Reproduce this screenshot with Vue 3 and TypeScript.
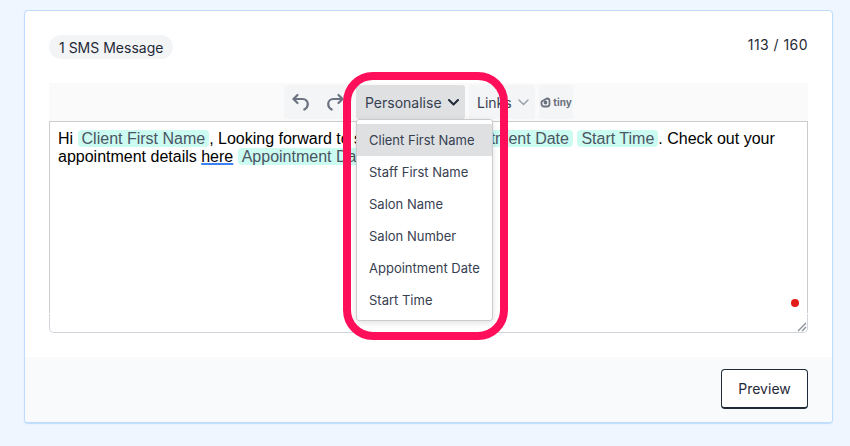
<script setup lang="ts">
const menuItems: string[] = [
  'Client First Name',
  'Staff First Name',
  'Salon Name',
  'Salon Number',
  'Appointment Date',
  'Start Time',
];
</script>

<template>
  <div class="Page">
    <div class="Card">
      <div class="CardBody">
        <div class="TopRow">
          <span class="Pill">1 SMS Message</span>
          <span class="Count">113 / 160</span>
        </div>

        <div class="Editor">
          <div class="Toolbar">
            <div class="IconGroup">
              <button class="ToolIcon">
                <svg width="20" height="20" viewBox="0 0 20 20" fill="none" stroke="#6b7280" stroke-width="2.200" stroke-linecap="round" stroke-linejoin="round">
                  <path d="M6.500 3 2.500 7l4 4" />
                  <path d="M2.800 7h9a5 5 0 0 1 5 5c0 2.500-1.500 4.500-3.500 5.500" />
                </svg>
              </button>
              <button class="ToolIcon">
                <svg width="20" height="20" viewBox="0 0 20 20" fill="none" stroke="#6b7280" stroke-width="2.200" stroke-linecap="round" stroke-linejoin="round">
                  <path d="M13.500 3l4 4-4 4" />
                  <path d="M17.200 7h-9a5 5 0 0 0-5 5c0 2.500 1.500 4.500 3.500 5.500" />
                </svg>
              </button>
            </div>
            <button class="ToolMenu Active">
              Personalise
              <svg width="11" height="7" viewBox="0 0 11 7" fill="none" stroke="#1f2937" stroke-width="2" stroke-linecap="round" stroke-linejoin="round">
                <path d="M1 1l4.500 4.500L10 1" />
              </svg>
            </button>
            <button class="ToolMenu Links">
              Links
              <svg width="11" height="7" viewBox="0 0 11 7" fill="none" stroke="#9ca3af" stroke-width="1.500" stroke-linecap="round" stroke-linejoin="round">
                <path d="M1 1l4.500 4.500L10 1" />
              </svg>
            </button>
            <div class="Tiny">
              <svg width="11" height="11" viewBox="0 0 11 11" fill="none" stroke="#6b7280" stroke-width="1.800">
                <path d="M2 4.200 7 1.500a2.500 2.500 0 0 1 2.500 2.500v3a2.500 2.500 0 0 1-2.500 2.500H4A2.500 2.500 0 0 1 1.500 7V5z" />
                <circle cx="5.500" cy="5.500" r="1" />
              </svg>
              <span>tiny</span>
            </div>

            <ul class="Menu">
              <li v-for="(item, index) in menuItems" :key="item" :class="{ Selected: index === 0 }">{{ item }}</li>
            </ul>
          </div>

          <div class="Content">
            <p>
              Hi <span class="Chip">Client First Name</span>, Looking forward to see you on <span class="Chip">Appointment Date</span> <span class="Chip">Start Time</span>. Check out your appointment details <a class="Link">here</a> <span class="Chip">Appointment Date</span>
            </p>
            <span class="Dot"></span>
          </div>
          <div class="Status">
            <svg class="Grip" width="10" height="10" viewBox="0 0 10 10" stroke="#8a8f98" stroke-width="1.300" fill="none">
              <path d="M1 9 9 1M5 9l4-4" />
            </svg>
          </div>
        </div>
      </div>

      <div class="Footer">
        <button class="Preview">Preview</button>
      </div>

      <div class="Highlight"></div>
    </div>
  </div>
</template>

<style>
html, body {
  margin: 0;
  background: #eff6ff;
}
</style>

<style scoped>
.Page {
  height: 446px;
  box-sizing: border-box;
  padding: 10px 17px 23px 24px;
  overflow: hidden;
  font-family: Inter, sans-serif;
  color: #1f2937;
}

.Card {
  position: relative;
  box-sizing: border-box;
  height: 413px;
  display: flex;
  flex-direction: column;
  background: #fff;
  border: 1px solid #bfdbfe;
  border-radius: 4px;
  box-shadow: 0 1px 1px rgba(147, 197, 253, 0.5);
  overflow: hidden;
}

.CardBody {
  flex: 1;
  padding: 24px;
}

.TopRow {
  display: flex;
  justify-content: space-between;
  align-items: flex-start;
  height: 48px;
}

.Pill {
  box-sizing: border-box;
  height: 24px;
  padding: 0 10px;
  display: flex;
  align-items: center;
  background: #f3f4f6;
  border-radius: 12px;
  font-size: 14px;
  white-space: nowrap;
}

.Count {
  font-size: 14px;
  line-height: 20px;
  letter-spacing: 0.45px;
}

.Editor {
  width: 759px;
}

.Toolbar {
  position: relative;
  height: 38px;
  display: flex;
  justify-content: center;
  align-items: center;
  gap: 4px;
  background: #fafafa;
}

.IconGroup {
  display: flex;
  height: 34px;
  background: #f4f5f6;
  border-radius: 3px;
}

.ToolIcon {
  width: 34px;
  height: 34px;
  padding: 0;
  display: flex;
  align-items: center;
  justify-content: center;
  background: none;
  border: 0;
}

.ToolMenu {
  height: 34px;
  display: flex;
  align-items: center;
  justify-content: space-between;
  box-sizing: border-box;
  padding: 0 6px 0 9px;
  background: #f4f5f6;
  border: 0;
  border-radius: 3px;
  font-family: Inter, sans-serif;
  font-size: 14px;
  color: #374151;
}

.Active {
  width: 109px;
  background: #dee0e2;
}

.Links {
  width: 66px;
  padding-left: 8px;
}

.Tiny {
  width: 34px;
  height: 34px;
  display: flex;
  align-items: center;
  justify-content: center;
  gap: 2px;
  background: #f4f5f6;
  border-radius: 3px;
  font-size: 10px;
  font-weight: 700;
  color: #6b7280;
}

.Menu {
  position: absolute;
  z-index: 2;
  left: 307px;
  top: 36px;
  box-sizing: border-box;
  width: 137px;
  height: 202px;
  margin: 0;
  padding: 4px 0;
  list-style: none;
  background: #fff;
  border: 1px solid #ccc;
  border-radius: 3px;
  box-shadow: 0 2px 6px rgba(0, 0, 0, 0.12);
}

.Menu li {
  height: 32px;
  line-height: 32px;
  padding-left: 12px;
  font-size: 13px;
  color: #374151;
  white-space: nowrap;
}

.Menu .Selected {
  background: #dee0e2;
}

.Content {
  position: relative;
  box-sizing: border-box;
  height: 192px;
  padding: 8px;
  border: 1px solid #ccc;
  border-bottom: 0;
  font-family: "Liberation Sans", Arial, sans-serif;
  font-size: 16px;
  line-height: 18px;
  color: #000;
}

.Content p {
  margin: 0;
}

.Chip {
  padding: 0 4px;
  background: #ccfbf1;
  border-radius: 4px;
  color: #4b5563;
}

.Link {
  color: #000;
  text-decoration: underline;
  text-decoration-color: #3b82f6;
  text-decoration-thickness: 2px;
}

.Dot {
  position: absolute;
  right: 8px;
  bottom: 6px;
  width: 8px;
  height: 8px;
  border-radius: 50%;
  background: #e31b1b;
}

.Status {
  position: relative;
  box-sizing: border-box;
  height: 19px;
  margin-top: 1px;
  border: 1px solid #d1d5db;
  border-top: 0;
  border-radius: 0 0 5px 5px;
}

.Grip {
  position: absolute;
  right: 0;
  bottom: 0;
}

.Footer {
  height: 65px;
  flex: none;
  display: flex;
  justify-content: flex-end;
  align-items: flex-start;
  box-sizing: border-box;
  padding: 12px 24px 0 0;
  background: #f9fafb;
}

.Preview {
  box-sizing: border-box;
  width: 87px;
  height: 40px;
  background: #fff;
  border: 1px solid #1f2937;
  border-bottom-width: 2px;
  border-radius: 4px;
  font-family: Inter, sans-serif;
  font-size: 14px;
  color: #1f2937;
}

.Highlight {
  position: absolute;
  z-index: 3;
  left: 318px;
  top: 61px;
  box-sizing: border-box;
  width: 165px;
  height: 268px;
  border: 8px solid #ff0f5a;
  border-radius: 30px;
  pointer-events: none;
}
</style>
